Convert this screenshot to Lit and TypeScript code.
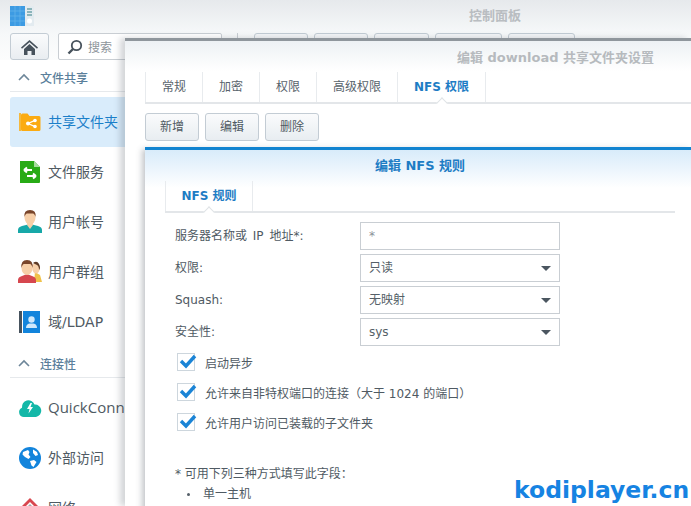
import { LitElement, html, css, svg } from "lit";
import { customElement } from "lit/decorators.js";

const icons: Record<string, unknown> = {
  folder: svg`<svg width="24" height="24" viewBox="0 0 24 24"><path d="M1 3h2v18H1z" fill="#f5b83d"/><path d="M3 5q0-1.500 1.500-1.500h5l2 2.500h9.500q1.500 0 1.500 1.500v12q0 1.500-1.500 1.500h-16.500q-1.500 0-1.500-1.500z" fill="#fbab12"/><g stroke="#fff" stroke-width="1.300"><path d="M10 13.500l7-3.200M10 13.500l7 3.200"/></g><g fill="#fff"><circle cx="10" cy="13.500" r="2"/><circle cx="17" cy="10.500" r="1.800"/><circle cx="17" cy="16.500" r="1.800"/></g></svg>`,
  file: svg`<svg width="24" height="24" viewBox="0 0 24 24"><path d="M2 1h14l6 6v15a1 1 0 0 1-1 1H2z" fill="#28ab16"/><path d="M16 1l6 6h-6z" fill="#a7dc9e"/><path d="M6 10h8M6 10l3-2.500M6 10l3 2.500M18 16h-9M18 16l-3-2.500M18 16l-3 2.500" stroke="#fff" stroke-width="2" fill="none"/></svg>`,
  user: svg`<svg width="26" height="26" viewBox="0 0 26 26"><path d="M1 24v-3q0-3 4-4l8-2 8 2q4 1 4 4v3z" fill="#17a8a8"/><path d="M10 14h6v2l-3 4-3-4z" fill="#f7cfa8"/><ellipse cx="13" cy="8.500" rx="5.500" ry="7" fill="#f7cfa8"/><path d="M7.500 8q-1-7 5.500-7t5.500 7q-1-3.500-2.500-3.500h-6q-1.500 0-2.500 3.500z" fill="#79452a"/></svg>`,
  group: svg`<svg width="26" height="26" viewBox="0 0 26 26"><path d="M18 13l5 3 2 7h-8z" fill="#f0c24a"/><ellipse cx="19" cy="9" rx="3.800" ry="5.500" fill="#f7cfa8"/><path d="M16 4q4-3 6 1t0 6q0-4-2-5z" fill="#5d3a26"/><path d="M1 24v-3q0-3 4-4l5-2 5 2q4 1 4 4v3z" fill="#d6474f"/><ellipse cx="10" cy="9" rx="5.500" ry="7" fill="#f7cfa8"/><path d="M4.500 9q-1-8 5.500-8t5.500 8q-1-4-2.500-4h-6q-1.500 0-2.500 4z" fill="#79452a"/></svg>`,
  ldap: svg`<svg width="24" height="24" viewBox="0 0 24 24"><rect x="1" y="1" width="3" height="22" fill="#47535e"/><rect x="5" y="1" width="17" height="22" fill="#1284dc"/><circle cx="13.500" cy="9.500" r="3.200" fill="#cfe8fb"/><path d="M8 18q0-4 3.500-4.500h4q3.500.5 3.500 4.500z" fill="#cfe8fb"/></svg>`,
  qc: svg`<svg width="24" height="24" viewBox="0 0 24 24"><path d="M6 21a4.800 4.800 0 0 1-2-9.200 6.500 6.500 0 0 1 12.500-3.300 6.300 6.300 0 0 1 1.500 12.500z" fill="#14b8a8"/><path d="M12.500 7l-3.500 6h2.500l-1 4.500 4.500-6.500h-2.500l1.500-4z" fill="#fff"/></svg>`,
  globe: svg`<svg width="24" height="24" viewBox="0 0 24 24"><circle cx="12" cy="12" r="11" fill="#1284dc"/><path d="M5 6l5-2 1.500 2-1 2.500 2 2.500-2 2-3.500-2-2.500-2.500zM15 3.500l4 2.500 1 3-2.500 1-2.500-3zM12 15l4-1 2.500 2-3 5-2-1.500z" fill="#fff"/></svg>`,
  net: svg`<svg width="24" height="24" viewBox="0 0 24 24"><path d="M12 2L1 13l2 2 9-9 9 9 2-2z" fill="#d8474f"/><path d="M12 8l-7 7v8h14v-8z" fill="#a5abb0"/></svg>`,
};

@customElement("app-root")
export class AppRoot extends LitElement {
  static styles = css`
    :host { display: block; width: 691px; height: 506px; overflow: hidden; position: relative; background: #fff;
      font-family: "DejaVu Sans", "Noto Sans CJK SC", sans-serif; font-size: 12px; color: #4f5a63; }
    .bg { width: 691px; height: 506px; display: flex; flex-direction: column; }
    .head { height: 33px; flex: none; background: linear-gradient(#e6e9ec, #f6f8f9); display: flex; padding: 6px 0 0 10px; box-sizing: border-box; position: relative; }
    .ctitle { position: absolute; left: 469px; top: 8px; font-size: 13px; font-weight: 700; color: #b9bdc1; line-height: 16px; }
    .tools { height: 27px; flex: none; display: flex; background: linear-gradient(#f6f8f9, #fcfdfd); padding: 0 0 0 10px; gap: 9px; align-items: flex-start; }
    .hbtn { width: 39px; height: 27px; box-sizing: border-box; border: 1px solid #c3ccd4; border-radius: 3px; background: linear-gradient(#fafbfc, #e9edf1); display: flex; align-items: center; justify-content: center; }
    .search { width: 164px; height: 27px; box-sizing: border-box; border: 1px solid #c9ced3; background: #fff; border-radius: 2px; display: flex; align-items: center; padding-left: 8px; gap: 5px; color: #8e959b; font-size: 12px; }
    .sep { width: 1px; height: 16px; background: #c9ced3; margin: 0 0 0 6px; }
    .tb { height: 27px; box-sizing: border-box; border: 1px solid #c3ccd4; border-radius: 3px; background: #f4f6f8; }
    .more { display: flex; gap: 6px; margin-left: 7px; }
    .side { width: 125px; flex: none; padding-top: 4px; }
    .sec { height: 28px; margin-left: 10px; box-sizing: border-box; border-bottom: 1px solid #e6e9ec; display: flex; align-items: center; color: #5b7f9b; font-weight: 500; font-size: 12px; padding: 0 0 1px 8px; gap: 10px; }
    .sec2 { margin-top: 3px; }
    .sec2 + .item { margin-top: 5px; }
    .item { height: 50px; margin-left: 10px; display: flex; align-items: center; gap: 5px; padding-left: 8px; font-size: 14px; color: #4f5a63; white-space: nowrap; overflow: hidden; border-radius: 3px 0 0 3px; }
    .item.on { background: #d9ecfb; color: #1b7fc9; margin-top: 5px; }
    .item > span:last-child { padding-bottom: 2px; }
    .ic { width: 26px; display: flex; justify-content: center; flex: none; margin-left: -1px; }
    .qc { font-family: "Open Sans", sans-serif; font-size: 15px; }

    .win { position: absolute; left: 125px; top: 38px; width: 566px; height: 468px; box-sizing: border-box; border-top: 3px solid #8f969c;
      background: linear-gradient(#edf1f4, #fff 30px); box-shadow: -5px 0 6px rgba(60, 70, 80, .22); padding: 0 0 0 20px; }
    .wtitle { color: #b6babe; font-weight: 700; font-size: 13px; line-height: 17px; padding: 8px 0 0 312px; height: 24px; box-sizing: border-box; }
    .tabs { height: 30px; margin-top: 7px; display: flex; border-bottom: 2px solid #e3e6e9; position: relative; }
    .tab { height: 30px; border-left: 1px solid #e8ebee; display: flex; align-items: center; justify-content: center; box-sizing: border-box; color: #58636c; position: relative; padding-bottom: 4px; }
    .tab.end { border-right: 1px solid #e8ebee; }
    .tab.act { color: #1d7cc4; font-weight: 700; }
    .tab.act::after { content: ""; position: absolute; left: 50%; bottom: -5px; width: 7px; height: 7px; margin-left: -4px; background: #fff; border-left: 1px solid #dfe3e6; border-top: 1px solid #dfe3e6; transform: rotate(45deg); }
    .btns { display: flex; gap: 6px; margin-top: 9px; }
    .btn { width: 54px; height: 28px; box-sizing: border-box; border: 1px solid #c3ccd4; border-radius: 3px; background: linear-gradient(#fafbfc, #e8edf1); display: flex; align-items: center; justify-content: center; color: #4f5a63; padding-bottom: 3px; }
    .dlg { margin-top: 6px; height: 360px; border-top: 3px solid #1284d0; background: linear-gradient(#d8ebfa, #fff 38px); box-shadow: -3px 2px 6px rgba(60, 70, 80, .3); padding: 0 16px 0 20px; }
    .dtitle { text-align: center; color: #1d7cc4; font-weight: 700; font-size: 13px; height: 31px; line-height: 31px; }
    .tabs2 { margin-top: 0; width: 510px; }
    .rows { padding: 9px 0 0 10px; display: flex; flex-direction: column; gap: 4px; }
    .row { display: flex; align-items: center; height: 28px; }
    .lbl { width: 185px; flex: none; }
    .lbl.up, .inp.up { padding-bottom: 3px; }
    .lbl.wide { word-spacing: 2px; }
    .inp { width: 200px; height: 28px; box-sizing: border-box; border: 1px solid #c9ced3; background: #fff; display: flex; align-items: center; padding-left: 8px; position: relative; color: #555f68; }
    .inp.star { color: #8a9198; }
    .arrow { position: absolute; right: 8px; top: 11px; width: 0; height: 0; border-left: 5.500px solid transparent; border-right: 5.500px solid transparent; border-top: 5.500px solid #4b5660; }
    .checks { display: flex; flex-direction: column; gap: 10px; padding: 6px 0 0 12px; }
    .ck { display: flex; align-items: center; height: 20px; gap: 10px; }
    .box { width: 18px; height: 18px; box-sizing: border-box; border: 1px solid #cdd6dd; background: #fff; position: relative; flex: none; }
    .box svg { position: absolute; left: 1px; top: -1px; }
    .note { padding: 32px 0 0 10px; line-height: 20px; }
    .li { display: flex; padding-left: 12px; gap: 13px; align-items: center; }
    .dot { width: 3px; height: 3px; border-radius: 50%; background: #555f68; }
    .mark { position: absolute; left: 514px; top: 476px; font-family: "DejaVu Sans", sans-serif; font-weight: 700; font-size: 23.500px; line-height: 28px; color: #1683e2; text-shadow: 0 0 2px #fff, 0 0 2px #fff; white-space: nowrap; }
  `;

  private check() {
    return svg`<svg width="18" height="16" viewBox="0 0 18 16"><path d="M2 8l5 5 9-10" fill="none" stroke="#1a84d6" stroke-width="3.400"/></svg>`;
  }

  private item(ic: string, text: string, on = false, cls = "") {
    return html`<div class="item ${on ? "on" : ""}"><span class="ic">${icons[ic]}</span><span class=${cls}>${text}</span></div>`;
  }

  render() {
    const chev = svg`<svg width="12" height="8" viewBox="0 0 12 8"><path d="M1 7l5-5 5 5" fill="none" stroke="#6d8699" stroke-width="1.600"/></svg>`;
    const tbw = [54, 54, 55, 67, 67];
    return html`
      <div class="bg">
        <div class="head">
          <svg width="24" height="20" viewBox="0 0 24 20"><rect width="15" height="20" fill="#3d9be3"/><path d="M0 5h15M0 10h15M0 15h15M5 0v20M10 0v20" stroke="#62b2ea" stroke-width=".8"/><rect x="15" width="9" height="20" fill="#e3ebf0"/><path d="M17 3h5M17 6h5M17 9h5" stroke="#6fa3a8" stroke-width="1.400"/><circle cx="19.500" cy="15" r="2.500" fill="#fff"/></svg>
          <span class="ctitle">控制面板</span>
        </div>
        <div class="tools">
          <div class="hbtn"><svg width="17" height="16" viewBox="0 0 17 16"><path d="M8.500 1L0 8.500l1 1.200 7.500-6.500 7.500 6.500 1-1.200z" fill="#47525c"/><path d="M3 10l5.500-5 5.500 5v6h-3.500v-4h-4v4H3z" fill="#47525c"/></svg></div>
          <div class="search"><svg width="16" height="16" viewBox="0 0 16 16"><circle cx="9.500" cy="6.500" r="4.700" fill="none" stroke="#47525c" stroke-width="1.800"/><path d="M6 10l-4.500 4.500" stroke="#47525c" stroke-width="2.400"/></svg>搜索</div>
          <i class="sep"></i>
          <div class="more">${tbw.map((w) => html`<div class="tb" style="width:${w}px"></div>`)}</div>
        </div>
        <div class="side">
          <div class="sec">${chev}<span>文件共享</span></div>
          ${this.item("folder", "共享文件夹", true)}
          ${this.item("file", "文件服务")}
          ${this.item("user", "用户帐号")}
          ${this.item("group", "用户群组")}
          ${this.item("ldap", "域/LDAP")}
          <div class="sec sec2">${chev}<span>连接性</span></div>
          ${this.item("qc", "QuickConnect", false, "qc")}
          ${this.item("globe", "外部访问")}
          ${this.item("net", "网络")}
        </div>
      </div>

      <div class="win">
        <div class="wtitle">编辑 download 共享文件夹设置</div>
        <div class="tabs">
          <div class="tab" style="width:57px">常规</div>
          <div class="tab" style="width:57px">加密</div>
          <div class="tab" style="width:57px">权限</div>
          <div class="tab" style="width:81px">高级权限</div>
          <div class="tab act end" style="width:89px">NFS 权限</div>
        </div>
        <div class="btns">
          <div class="btn">新增</div><div class="btn">编辑</div><div class="btn">删除</div>
        </div>
        <div class="dlg">
          <div class="dtitle">编辑 NFS 规则</div>
          <div class="tabs tabs2"><div class="tab act end" style="width:88px">NFS 规则</div></div>
          <div class="rows">
            <div class="row"><span class="lbl up wide">服务器名称或 IP 地址*:</span><div class="inp star">*</div></div>
            <div class="row"><span class="lbl up">权限:</span><div class="inp up">只读<i class="arrow"></i></div></div>
            <div class="row"><span class="lbl">Squash:</span><div class="inp up">无映射<i class="arrow"></i></div></div>
            <div class="row"><span class="lbl up">安全性:</span><div class="inp">sys<i class="arrow"></i></div></div>
          </div>
          <div class="checks">
            <div class="ck"><span class="box">${this.check()}</span>启动异步</div>
            <div class="ck"><span class="box">${this.check()}</span>允许来自非特权端口的连接（大于 1024 的端口）</div>
            <div class="ck"><span class="box">${this.check()}</span>允许用户访问已装载的子文件夹</div>
          </div>
          <div class="note">
            <div>* 可用下列三种方式填写此字段：</div>
            <div class="li"><i class="dot"></i>单一主机</div>
          </div>
        </div>
      </div>
      <div class="mark">kodiplayer.cn</div>
    `;
  }
}
